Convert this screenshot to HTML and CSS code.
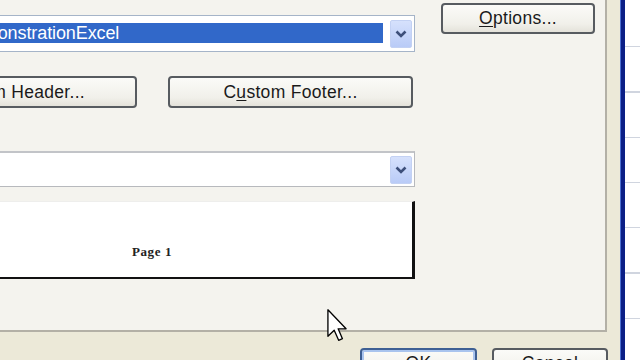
FILE: index.html
```html
<!DOCTYPE html>
<html>
<head>
<meta charset="utf-8">
<link rel="stylesheet" href="styles.css">
</head>
<body>
<div class="screen">
  <div class="dialog">
    <div class="panel">
      <div class="left">
        <div class="combo combo-sel">
          <div class="sel"><span class="sel-text">DemonstrationExcel</span></div>
          <div class="drop"><svg width="12" height="8" viewBox="0 0 12 8"><path d="M1.5 1.5 L6 6 L10.5 1.5" fill="none" stroke="#3d4f7a" stroke-width="2.6"/></svg></div>
        </div>
        <div class="btn-row">
          <div class="btn">Custom Header...</div>
          <div class="btn">C<u>u</u>stom Footer...</div>
        </div>
        <div class="combo combo-white">
          <div class="field"></div>
          <div class="drop"><svg width="12" height="8" viewBox="0 0 12 8"><path d="M1.5 1.5 L6 6 L10.5 1.5" fill="none" stroke="#3d4f7a" stroke-width="2.6"/></svg></div>
        </div>
        <div class="preview"><span class="page-label">Page 1</span></div>
      </div>
      <div class="right">
        <div class="btn btn-options"><u>O</u>ptions...</div>
      </div>
    </div>
    <div class="actions">
      <div class="btn btn-ok">OK</div>
      <div class="btn btn-cancel">Cancel</div>
    </div>
  </div>
  <div class="winborder"></div>
  <div class="sheet"></div>
</div>
<svg class="cursor" width="20" height="33" viewBox="0 0 12 20">
  <path d="M0.5 0.5 L0.5 16.5 L4.3 12.9 L7 19 L9.3 18 L6.7 12 L11.5 12 Z" fill="#fff" stroke="#000" stroke-width="0.8" stroke-linejoin="round"/>
</svg>
</body>
</html>
```
FILE: styles.css
```css
html, body {
  margin: 0;
  padding: 0;
}
body {
  width: 640px;
  height: 360px;
  overflow: hidden;
  background: #ece9d8;
  font-family: "Liberation Sans", Arial, sans-serif;
  font-size: 17.5px;
  letter-spacing: 0.3px;
  color: #111;
  position: relative;
}
.screen {
  display: flex;
  height: 360px;
}
.dialog {
  width: 620px;
  flex: none;
  display: flex;
  flex-direction: column;
  background: #ece9d8;
}
.panel {
  width: 607px;
  height: 332px;
  box-sizing: border-box;
  background: #f4f3ee;
  border-right: 2px solid #b3b0a6;
  border-bottom: 2px solid #b3b0a6;
  display: flex;
  flex: none;
}
.left {
  width: 523px;
  margin-left: -108px;
  flex: none;
  display: flex;
  flex-direction: column;
}
.right {
  margin-left: 26px;
  width: 154px;
  padding-top: 3px;
}
.combo {
  box-sizing: border-box;
  display: flex;
  align-items: center;
  padding: 0 2px 0 0;
}
.combo-sel {
  margin-top: 15px;
  height: 37px;
  border: 1px solid #a5b4c8;
  background: #fff;
}
.sel {
  flex: 1;
  height: 20px;
  margin-top: -1px;
  background: #3168c9;
  color: #fff;
  display: flex;
  align-items: center;
  overflow: hidden;
  margin-right: 7px;
  font-size: 18px;
  letter-spacing: -0.1px;
}
.sel-text {
  padding-left: 67px;
}
.drop {
  width: 22px;
  height: 28px;
  box-sizing: border-box;
  border: 1px solid #c3d1f3;
  border-radius: 2px;
  background: linear-gradient(#d6e1fc, #b9cbf7);
  display: flex;
  align-items: center;
  justify-content: center;
}
.combo-white {
  margin-top: 43px;
  height: 36px;
  border: 1px solid #b7b9bd;
  border-top: 2px solid #c2c4c8;
  background: #fff;
}
.field {
  flex: 1;
}
.btn-row {
  margin-top: 24px;
  display: grid;
  grid-template-columns: 245px 245px;
  column-gap: 31px;
}
.btn {
  box-sizing: border-box;
  height: 32px;
  border: 2px solid #575b60;
  border-radius: 4px;
  background: linear-gradient(#fbfbf8, #f1f0ea 70%, #e4e2da);
  display: flex;
  align-items: center;
  justify-content: center;
  color: #1a1a1a;
  white-space: nowrap;
}
.btn u {
  text-decoration-thickness: 1px;
  text-underline-offset: 2px;
}
.btn-options {
  height: 31px;
}
.preview {
  margin-top: 14px;
  height: 78px;
  box-sizing: border-box;
  background: #fff;
  border-top: 1px solid #eeeeec;
  border-right: 3px solid #111;
  border-bottom: 2px solid #111;
  display: flex;
  justify-content: center;
  padding-top: 43px;
}
.page-label {
  font-family: "Liberation Serif", "Times New Roman", serif;
  font-weight: bold;
  font-size: 13px;
  letter-spacing: 0.6px;
  color: #222;
  line-height: 14px;
  height: 14px;
}
.actions {
  display: flex;
  justify-content: flex-end;
  gap: 15px;
  padding: 16px 12px 0 0;
}
.btn-ok, .btn-cancel {
  height: 34px;
  align-items: flex-start;
  padding-top: 3px;
}
.btn-ok {
  width: 117px;
  border-color: #3e5f93;
  box-shadow: inset 0 0 0 2px #a9c4ee;
}
.btn-cancel {
  width: 116px;
}
.winborder {
  width: 4px;
  flex: none;
  background: #0b1f86;
  border-left: 1px solid #4c6fd0;
}
.sheet {
  flex: 1;
  background-color: #fff;
  background-image: repeating-linear-gradient(180deg, #fff 0, #fff 44px, #d0d5df 44px, #d0d5df 45.3px);
  background-position: 0 2px;
}
.cursor {
  position: absolute;
  left: 327px;
  top: 309px;
}
```
